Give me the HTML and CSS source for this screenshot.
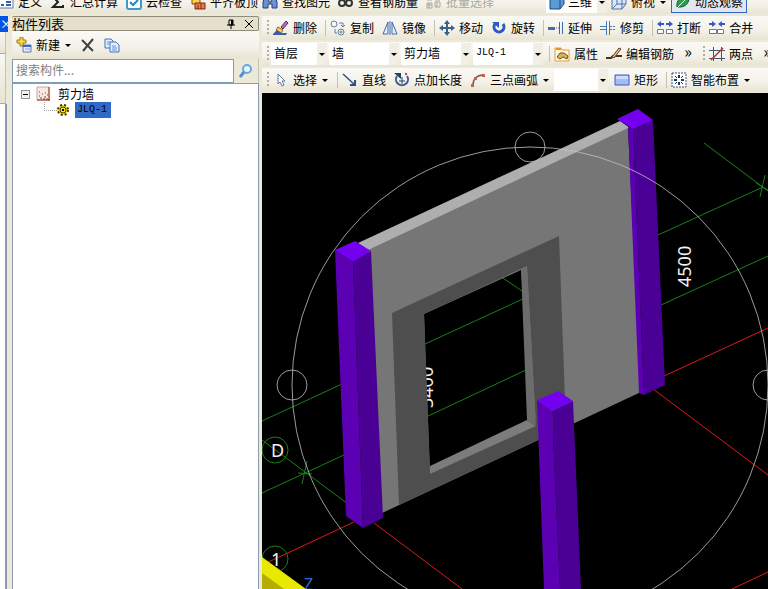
FILE: index.html
```
<!doctype html>
<html lang="zh-CN">

<head>
	<meta charset="UTF-8">
	<meta name="viewport" content="width=device-width, initial-scale=1.0">
	<title>构件列表</title>
	<link rel="stylesheet" href="styles.css">
</head>

<body>
	<svg class="sprite" aria-hidden="true">
		<symbol id="i-define" viewBox="0 0 16 16"><path d="M1 2h14v12H1z" fill="#fff" stroke="#5a78b0"/><path d="M3 11h3M8 11h5M8 8h5" stroke="#3a5fa8" stroke-width="2"/></symbol>
		<symbol id="i-sum" viewBox="0 0 16 16"><path d="M13 5V3H3l5 5-5 5h10v-2" fill="none" stroke="#222" stroke-width="2"/></symbol>
		<symbol id="i-cloud" viewBox="0 0 16 16"><rect x="1" y="1" width="14" height="14" rx="2" fill="#fff" stroke="#3a9ad0" stroke-width="2"/><path d="M4 8l3 3 5-5" fill="none" stroke="#2488c8" stroke-width="2"/></symbol>
		<symbol id="i-align" viewBox="0 0 16 16"><path d="M2 3h8v7H2z" fill="#ffd040" stroke="#7a5010"/><path d="M5 9h10v6H5z" fill="#e08050" stroke="#802010"/><path d="M8 15v-4M11 15V9" stroke="#a02010"/></symbol>
		<symbol id="i-find" viewBox="0 0 16 16"><path d="M1 8l2-6h3l1 6h2l1-6h3l2 6v6h-5v-4H6v4H1z" fill="#6c90d0" stroke="#20407c"/></symbol>
		<symbol id="i-glasses" viewBox="0 0 16 16"><g fill="none" stroke="#333" stroke-width="2"><circle cx="4" cy="9" r="3"/><circle cx="11" cy="9" r="3"/><path d="M6 5l8-1"/></g></symbol>
		<symbol id="i-batch" viewBox="0 0 16 16"><path d="M1 2h5v4H1zM9 2h5v4H9zM1 9h5v5H1zM9 8h5v5H9zM3 9v5M1 11h5M11 8v5" fill="none" stroke="#aaa69a"/></symbol>
		<symbol id="i-cube" viewBox="0 0 16 16"><path d="M1 5l5-4h9v9l-4 5H1z" fill="#5c9ad4" stroke="#1c4a80"/><path d="M1 5h10l4-4M11 5v10" fill="none" stroke="#1c4a80"/></symbol>
		<symbol id="i-topview" viewBox="0 0 16 16"><path d="M1 5l5-4h9v9l-4 5H1z" fill="#dce8f8" stroke="#4a70a8"/><path d="M1 5h10l4-4M11 5v10M6 1v9l-5 5M6 10h9" fill="none" stroke="#4a70a8"/></symbol>
		<symbol id="i-orbit" viewBox="0 0 16 16"><path d="M2 13C1 6 6 2 14 1c1 7-3 12-9 12z" fill="#28a048" stroke="#0c5c28"/><path d="M1 15L11 5" stroke="#e8fff0"/></symbol>
		<symbol id="i-erase" viewBox="0 0 16 16"><path d="M8 7l5-6 2 2-5 6z" fill="#b070c0" stroke="#503060"/><path d="M5 7l5 3-2 3-5-3z" fill="#f4d060" stroke="#906020"/><path d="M0 14l4-4 4 3h6l-1 2H0z" fill="#3c5ca8"/></symbol>
		<symbol id="i-copy" viewBox="0 0 16 16"><g fill="none" stroke="#6080a8"><circle cx="4" cy="4" r="3"/><circle cx="11" cy="12" r="3"/><circle cx="11" cy="12" r="1"/><path d="M9 3h4v4M5 9v4h2M11 5l2 2 2-2"/></g></symbol>
		<symbol id="i-mirror" viewBox="0 0 16 16"><path d="M6 2v12H1zM10 2v12h5z" fill="#e4f0ff" stroke="#4468a8"/><path d="M8 1v14" stroke="#4468a8"/></symbol>
		<symbol id="i-move" viewBox="0 0 16 16"><path d="M8 2v12M2 8h12" stroke="#3c608c" stroke-width="2"/><path d="M8 0l3 4H5zM8 16l3-4H5zM0 8l4-3v6zM16 8l-4-3v6z" fill="#3c608c"/></symbol>
		<symbol id="i-rotate" viewBox="0 0 16 16"><path d="M4 4a5 5 0 1 0 8 0" fill="none" stroke="#2c5cc0" stroke-width="3"/><path d="M1 2h7v6z" fill="#2c5cc0"/></symbol>
		<symbol id="i-extend" viewBox="0 0 16 16"><path d="M0 7h7v3H0z" fill="#4468a8"/><path d="M8 8h3" stroke="#4468a8" stroke-dasharray="1 1"/><path d="M11.500 2v12M14.500 2v12" stroke="#3468b0"/></symbol>
		<symbol id="i-trim" viewBox="0 0 16 16"><path d="M6.500 1v14M9.500 1v14M0 6.500h6M0 9.500h6" stroke="#4478b8"/><path d="M10 6.500h6M10 9.500h6" stroke="#4478b8" stroke-dasharray="2 1"/></symbol>
		<symbol id="i-break" viewBox="0 0 16 16"><path d="M0 4l4-3v2h3v2H4v2zM16 4l-4-3v2H9v2h3v2z" fill="#3858c0"/><path d="M.5 9.500h6v4h-6zM9.500 9.500h6v4h-6z" fill="#fff" stroke="#687890"/></symbol>
		<symbol id="i-join" viewBox="0 0 16 16"><path d="M7 4L3 1v2H0v2h3v2zM9 4l4-3v2h3v2h-3v2z" fill="#3858c0"/><path d="M.5 9.500h7v4h-7zM8.500 9.500h6v4h-6z" fill="#fff" stroke="#687890"/></symbol>
		<symbol id="i-props" viewBox="0 0 16 16"><path d="M1 2h6l1 2h7v11H1z" fill="#fff8dc" stroke="#e0a040"/><path d="M2 3h5" stroke="#f09020" stroke-width="2"/><path d="M3 11l3-4h4l4 3-1 3-4-2-3 2z" fill="#d8b060" stroke="#705020"/></symbol>
		<symbol id="i-rebar" viewBox="0 0 16 16"><path d="M0 12h5l2-2h9" fill="none" stroke="#483020" stroke-width="2"/><path d="M6 11l7-9 2 1-7 9z" fill="#e8c080" stroke="#604020"/></symbol>
		<symbol id="i-twopoint" viewBox="0 0 16 16"><path d="M4.500 1v14M12.500 1v14M0 4.500h16M0 12.500h16" stroke="#405878"/><path d="M2 14L14 2" stroke="#b03030" stroke-width="1.5"/></symbol>
		<symbol id="i-pointer" viewBox="0 0 16 16"><path d="M5 2v10l2-2 2 4 2-1-2-4h3z" fill="#fff" stroke="#6078a0"/></symbol>
		<symbol id="i-line" viewBox="0 0 16 16"><path d="M1 2l12 11" stroke="#305080" stroke-width="1.5"/><path d="M13 8v5H8" fill="none" stroke="#305080" stroke-width="2"/></symbol>
		<symbol id="i-length" viewBox="0 0 16 16"><path d="M3 4a6 6 0 1 0 10 0" fill="none" stroke="#3c5c90" stroke-width="2"/><path d="M0 1h7v6z" fill="#24406c"/><path d="M8 5v7M5 9h6" stroke="#24406c"/><path d="M11 1h2v2h-2z" fill="#c04020"/></symbol>
		<symbol id="i-arc" viewBox="0 0 16 16"><path d="M3 13C3 7 7 3 13 3" fill="none" stroke="#705858" stroke-width="1.5"/><path d="M1 12h3v3H1zM4 5h3v3H4zM12 2h3v3h-3z" fill="#d06040"/></symbol>
		<symbol id="i-rect" viewBox="0 0 16 16"><path d="M1 3h14v10H1z" fill="#a4bcf4" stroke="#3c60b8"/><path d="M2 4h12v3H2z" fill="#ccdcff"/></symbol>
		<symbol id="i-smart" viewBox="0 0 16 16"><path d="M1 1h14v14H1z" fill="#fff" stroke="#405468" stroke-dasharray="2 1"/><path d="M8 3v3M8 10v3M3 8h3M10 8h3" stroke="#203858" stroke-width="2"/><path d="M4 4l2 2M12 4l-2 2M4 12l2-2M12 12l-2-2" stroke="#203858"/></symbol>
		<symbol id="i-new" viewBox="0 0 16 16"><path d="M4 0h3v3h3v3H7v3H4V6H1V3h3z" fill="#f8d848" stroke="#a07818"/><path d="M7 8h8v7H7z" fill="#e8f0ff" stroke="#5878b8"/><path d="M7 9h8" stroke="#4068c0" stroke-width="2"/><path d="M9 12h5" stroke="#80a0d8"/></symbol>
		<symbol id="i-delete" viewBox="0 0 16 16"><path d="M2 3l11 11M13 2L3 14" stroke="#404040" stroke-width="2"/></symbol>
		<symbol id="i-pages" viewBox="0 0 16 16"><path d="M1 2h6l2 2v7H1z" fill="#e4eeff" stroke="#4870b8"/><path d="M6 5h6l3 3v7H6z" fill="#e4eeff" stroke="#4870b8"/><path d="M3 5h3M3 7h2M8 9h4M8 11h5M8 13h5" stroke="#6890d0"/></symbol>
		<symbol id="i-search" viewBox="0 0 16 16"><circle cx="9" cy="6" r="4" fill="#e8f6ff" stroke="#68a8e0" stroke-width="2"/><path d="M6 9l-4 5" stroke="#5090d0" stroke-width="3"/></symbol>
		<symbol id="i-wall" viewBox="0 0 16 16"><path d="M1 1h12v13H1z" fill="#f8e8e0" stroke="#c8a8a0"/><path d="M3 10h1M6 8h1M4 12h2M8 11h2M9 7h1M7 13h2M11 9h1M3 6h1M10 13h2" stroke="#804040"/><path d="M13 1v14M1 14h13" stroke="#903820"/></symbol>
		<symbol id="i-gear" viewBox="0 0 12 12"><circle cx="6" cy="6" r="5" fill="#ffe818" stroke="#403800" stroke-width="2" stroke-dasharray="2 2"/><circle cx="6" cy="6" r="3" fill="#ffe818" stroke="#403800"/><path d="M5 5h2v2H5z" fill="#000"/></symbol>
		<symbol id="i-pin" viewBox="0 0 10 10"><path d="M3 1h4v5H3zM1 6h8M5 6v4" fill="none" stroke="#000"/><path d="M6 1v5" stroke="#000" stroke-width="2"/></symbol>
		<symbol id="i-close" viewBox="0 0 10 10"><path d="M1 1l8 8M9 1L1 9" stroke="#000"/></symbol>
	</svg>

	<header class="top-bar">
		<div class="toolbar top-left">
			<button class="tool"><svg class="icon"><use href="#i-define"/></svg>定义</button>
			<button class="tool"><svg class="icon"><use href="#i-sum"/></svg>汇总计算</button>
			<button class="tool"><svg class="icon"><use href="#i-cloud"/></svg>云检查</button>
			<button class="tool"><svg class="icon"><use href="#i-align"/></svg>平齐板顶</button>
		</div>
		<div class="toolbar top-right">
			<button class="tool"><svg class="icon"><use href="#i-find"/></svg>查找图元</button>
			<button class="tool"><svg class="icon"><use href="#i-glasses"/></svg>查看钢筋量</button>
			<button class="tool" disabled><svg class="icon"><use href="#i-batch"/></svg>批量选择</button>
			<div class="view-mode">
				<svg class="icon"><use href="#i-cube"/></svg>
				<select class="combo" aria-label="视图"><option>三维</option></select>
			</div>
			<button class="tool drop"><svg class="icon"><use href="#i-topview"/></svg>俯视</button>
			<button class="tool pressed"><svg class="icon"><use href="#i-orbit"/></svg>动态观察</button>
		</div>
	</header>

	<div class="workspace">
		<aside class="rail">
			<div class="rail-title">×</div>
			<div class="rail-tab"></div>
			<div class="rail-tab"></div>
			<div class="rail-body"></div>
		</aside>

		<section class="panel">
			<div class="panel-title">
				<h1>构件列表</h1>
				<button class="mini" aria-label="固定"><svg><use href="#i-pin"/></svg></button>
				<button class="mini" aria-label="关闭"><svg><use href="#i-close"/></svg></button>
			</div>
			<div class="toolbar panel-tools">
				<button class="tool drop"><svg class="icon"><use href="#i-new"/></svg>新建</button>
				<button class="tool" aria-label="删除"><svg class="icon"><use href="#i-delete"/></svg></button>
				<button class="tool" aria-label="复制"><svg class="icon"><use href="#i-pages"/></svg></button>
			</div>
			<form class="search">
				<input type="text" placeholder="搜索构件..." aria-label="搜索构件">
				<button type="button" aria-label="搜索"><svg class="icon"><use href="#i-search"/></svg></button>
			</form>
			<ul class="tree">
				<li>
					<div class="node"><button class="toggle" aria-label="折叠"></button><svg class="icon"><use href="#i-wall"/></svg>剪力墙</div>
					<ul>
						<li class="node leaf"><svg class="gear"><use href="#i-gear"/></svg><span class="selected">JLQ-1</span></li>
					</ul>
				</li>
			</ul>
		</section>

		<main class="editor">
			<div class="toolbar">
				<span class="grip"></span>
				<button class="tool"><svg class="icon"><use href="#i-erase"/></svg>删除</button>
				<span class="sep"></span>
				<button class="tool"><svg class="icon"><use href="#i-copy"/></svg>复制</button>
				<button class="tool"><svg class="icon"><use href="#i-mirror"/></svg>镜像</button>
				<span class="sep"></span>
				<button class="tool"><svg class="icon"><use href="#i-move"/></svg>移动</button>
				<button class="tool"><svg class="icon"><use href="#i-rotate"/></svg>旋转</button>
				<span class="sep"></span>
				<button class="tool"><svg class="icon"><use href="#i-extend"/></svg>延伸</button>
				<button class="tool"><svg class="icon"><use href="#i-trim"/></svg>修剪</button>
				<span class="sep"></span>
				<button class="tool"><svg class="icon"><use href="#i-break"/></svg>打断</button>
				<button class="tool"><svg class="icon"><use href="#i-join"/></svg>合并</button>
			</div>

			<div class="toolbar">
				<span class="grip"></span>
				<select class="combo floor" aria-label="楼层"><option>首层</option></select>
				<select class="combo" aria-label="构件类型"><option>墙</option></select>
				<select class="combo" aria-label="构件"><option>剪力墙</option></select>
				<select class="combo latin" aria-label="构件名称"><option>JLQ-1</option></select>
				<span class="sep"></span>
				<button class="tool"><svg class="icon"><use href="#i-props"/></svg>属性</button>
				<button class="tool"><svg class="icon"><use href="#i-rebar"/></svg>编辑钢筋</button>
				<button class="more" aria-label="更多">»</button>
				<span class="grip"></span>
				<button class="tool"><svg class="icon"><use href="#i-twopoint"/></svg>两点</button>
				<button class="more" aria-label="更多">»</button>
			</div>

			<div class="toolbar">
				<span class="grip"></span>
				<button class="tool drop"><svg class="icon"><use href="#i-pointer"/></svg>选择</button>
				<span class="sep"></span>
				<button class="tool"><svg class="icon"><use href="#i-line"/></svg>直线</button>
				<button class="tool"><svg class="icon"><use href="#i-length"/></svg>点加长度</button>
				<button class="tool drop"><svg class="icon"><use href="#i-arc"/></svg>三点画弧</button>
				<select class="combo mode" aria-label="画弧方式"><option></option></select>
				<button class="tool"><svg class="icon"><use href="#i-rect"/></svg>矩形</button>
				<span class="sep"></span>
				<button class="tool drop"><svg class="icon"><use href="#i-smart"/></svg>智能布置</button>
			</div>

			<svg class="viewport" viewBox="262 93 506 496" preserveAspectRatio="xMinYMin slice">
				<!-- axis grid -->
				<g class="axis">
					<path d="M704 143l64 48M658 235l105-48M661 305l107-49M760 197l5-22M756 183l12 7"/>
					<path d="M425 344l100-46M500 276l25 17M426 417l100-47"/>
					<path d="M262 421l80-37M262 493l84-39M262 440l86 64M302 484l5-23M298 473l14 1"/>
					<circle cx="275" cy="450" r="13"/>
					<circle cx="275" cy="559" r="13"/>
				</g>
				<path class="axis-red" d="M262 565l92-43M370 520l92 69M662 377l106-49M653 389l115 86M732 589l36-17"/>
				<text class="dim" transform="translate(433 408) rotate(-90)">3400</text>
				<text class="dim" transform="translate(691 287) rotate(-90)">4500</text>
				<text class="dim" x="271" y="457">D</text>
				<text class="dim" x="271" y="566">1</text>

				<!-- wall with opening -->
				<path fill="#aeaeae" d="M358 243L620 121L630 128L368 251z"/>
				<path fill="#767676" fill-rule="evenodd" d="M368 250L628 128L641 392L380 514zM424 314L430 474L536 426L521 270z"/>
				<path fill="#4e4e4e" fill-rule="evenodd" d="M392 313L559 236L566 427L399 505zM424 314L430 474L536 426L527 266z"/>
				<path fill="#6c6c6c" d="M521 270L527 266L536 426L527 420z"/>
				<path fill="#7c7c7c" d="M430 466L527 420L536 426L430 474z"/>

				<!-- columns -->
				<g class="column">
					<path class="lit" d="M335 250L353 262L363 528L346 516z"/>
					<path class="shade" d="M353 262L371 251L383 518L363 528z"/>
					<path class="cap" d="M335 250L355 241L371 251L353 262z"/>
					<path class="lit" d="M628 126L633 129L644 395L639 393z"/>
					<path class="shade" d="M633 129L653 120L665 385L644 395z"/>
					<path class="cap" d="M617 119L638 109L653 120L633 129z"/>
					<path class="lit" d="M537 400L552 411L560 589H544z"/>
					<path class="shade" d="M552 411L573 401L581 589H560z"/>
					<path class="cap" d="M537 400L558 391L573 401L552 411z"/>
				</g>
				<path fill="#e8e800" d="M262 557L306 589H262z"/>
				<path fill="#b4ae00" d="M262 573L284 589H262z"/>
				<text class="z-label" x="304" y="590">Z</text>

				<!-- orbit handles -->
				<g class="orbit">
					<circle cx="530" cy="385" r="238"/>
					<circle cx="530" cy="147" r="15"/>
					<circle cx="292" cy="385" r="15"/>
					<circle cx="768" cy="385" r="15"/>
				</g>
			</svg>
		</main>
	</div>
</body>

</html>
```
FILE: styles.css
```
:root {
	--face: #ece9d8;
	--edge: #8a9bb0;
	--select: #316ac5;
	--arrow: url("data:image/svg+xml,%3Csvg xmlns='http://www.w3.org/2000/svg' width='6' height='3'%3E%3Cpath d='M0 0h6L3 3z'/%3E%3C/svg%3E");
}

* {
	box-sizing: border-box;
	margin: 0;
	padding: 0;
}

body {
	display: flex;
	flex-direction: column;
	height: 100vh;
	overflow: hidden;
	background: var(--face);
	color: #000;
	font: 12px/16px "Noto Sans CJK SC", "Liberation Sans", sans-serif;
}

button,
input,
select {
	font: inherit;
	color: inherit;
	background: none;
	border: 0;
	border-radius: 0;
}

.sprite {
	position: absolute;
	width: 0;
	height: 0;
}

.icon {
	flex: none;
	width: 16px;
	height: 16px;
}

/* toolbars */
.toolbar {
	display: flex;
	align-items: center;
	flex: none;
	height: 24px;
	overflow: hidden;
	background: linear-gradient(#faf9f5, #f3f1e8 60%, #e8e4d2);
	white-space: nowrap;
}

.tool {
	display: flex;
	align-items: center;
	gap: 4px;
	flex: none;
	height: 22px;
	padding: 0 4px;
}

.tool:disabled {
	color: #aca899;
}

.drop {
	padding-right: 16px;
	background: var(--arrow) right 5px center no-repeat;
}

.pressed {
	padding: 0 3px;
	border: 1px solid var(--select);
	background: #e1e6f0;
}

.sep {
	flex: none;
	width: 1px;
	height: 16px;
	margin-left: 4px;
	background: #c5c2b0;
}

.grip {
	flex: none;
	width: 2px;
	height: 16px;
	margin: 0 0 0 5px;
	background: repeating-linear-gradient(#b4b09c 0 2px, transparent 2px 4px);
}

.combo {
	appearance: none;
	flex: none;
	width: 70px;
	height: 22px;
	margin-right: 2px;
	padding: 0 12px 3px 3px;
	background: var(--arrow) right 2px center no-repeat, linear-gradient(to left, #f1efe4 10px, #fff 10px);
}

.floor {
	width: 56px;
	margin-left: 2px;
}

.latin,
.selected {
	font-family: "Liberation Mono", monospace;
	font-size: 10px;
}

.mode {
	width: 54px;
}

.more {
	flex: none;
	width: 20px;
	height: 22px;
	padding-bottom: 6px;
	font-size: 16px;
}

/* main toolbar, scrolled partly out of the top */
.top-bar {
	display: flex;
	align-items: flex-end;
	flex: none;
	height: 14px;
	margin-bottom: 2px;
	overflow: hidden;
}

.top-left {
	flex: 0 0 258px;
	padding-left: 0;
}

.top-left .tool:first-child {
	margin-left: -6px;
}

.top-right {
	flex: 1;
}

.view-mode {
	display: flex;
	align-items: center;
	height: 22px;
	margin-left: 48px;
	padding-left: 3px;
	background: #fff;
}

.view-mode .combo {
	width: 42px;
	margin-right: 0;
	padding-bottom: 0;
}

.workspace {
	display: flex;
	flex: 1;
	min-height: 0;
}

/* docked rail */
.rail {
	display: flex;
	flex-direction: column;
	flex: 0 0 8px;
	margin-right: 4px;
	overflow: hidden;
}

.rail-title {
	height: 16px;
	background: #0054e3;
	color: #fff;
	line-height: 16px;
}

.rail-tab {
	width: 6px;
	height: 22px;
	border-right: 1px solid #c5c2b0;
	border-bottom: 1px solid #aca899;
	background: linear-gradient(#f8f7f0, #e8e4d2);
}

.rail-tab + .rail-tab {
	height: 50px;
}

.rail-body {
	flex: 1;
	width: 7px;
	border-right: 2px solid var(--edge);
	background: #fff;
}

/* component list */
.panel {
	display: flex;
	flex-direction: column;
	flex: 0 0 247px;
	margin-right: 3px;
}

.panel-title {
	display: flex;
	align-items: center;
	height: 15px;
	border: 1px solid #8f8c7c;
	border-left: 0;
	border-radius: 2px;
	background: #e4e0cc;
}

.panel-title h1 {
	flex: 1;
	font-size: 13px;
	font-weight: 400;
	line-height: 13px;
}

.mini {
	width: 10px;
	height: 10px;
	margin-right: 8px;
}

.mini + .mini {
	margin-right: 4px;
}

.mini svg {
	display: block;
	width: 10px;
	height: 10px;
}

.panel-tools {
	height: 28px;
}

.search {
	display: flex;
	height: 24px;
}

.search input {
	flex: 1;
	min-width: 0;
	padding: 0 3px 3px;
	border: 1px solid #7f9db9;
	background: #fff;
}

.search input::placeholder {
	color: #808080;
}

.search button {
	display: grid;
	place-items: center;
	width: 25px;
	border-right: 1px solid #c5c2b0;
}

.tree {
	flex: 1;
	padding: 2px 8px;
	border: 1px solid var(--edge);
	border-bottom: 0;
	background: #fff;
	list-style: none;
}

.tree ul {
	margin-left: 18px;
	list-style: none;
}

.node {
	display: flex;
	align-items: center;
	gap: 6px;
	height: 16px;
}

.toggle {
	width: 9px;
	height: 9px;
	border: 1px solid #8898a8;
	background: linear-gradient(#000, #000) center / 5px 1px no-repeat, #f4f2ea;
}

.leaf::before {
	content: "";
	width: 12px;
	height: 8px;
	margin: 0 -6px 8px 5px;
	border-left: 1px dotted #a0a0a0;
	border-bottom: 1px dotted #a0a0a0;
}

.gear {
	width: 12px;
	height: 12px;
}

.selected {
	padding: 0 4px 0 2px;
	background: var(--select);
}

/* drawing area */
.editor {
	display: flex;
	flex-direction: column;
	flex: 1;
	gap: 2px;
	min-width: 0;
}

.viewport {
	flex: 1;
	width: 100%;
	min-height: 0;
	margin-top: -1px;
	background: #000;
}

.axis,
.axis-red,
.orbit {
	fill: none;
	stroke: #188018;
}

.axis-red {
	stroke: #e01818;
}

.orbit {
	stroke: #c0c0c0;
	stroke-opacity: .8;
}

.dim {
	fill: #f0f0f0;
	font: 18px "Noto Sans", sans-serif;
}

.z-label {
	fill: #2c6cd8;
	font: 16px "Noto Sans", sans-serif;
}

.lit {
	fill: #5c00b4;
}

.shade {
	fill: #4a0094;
}

.cap {
	fill: #7400f0;
}
```
